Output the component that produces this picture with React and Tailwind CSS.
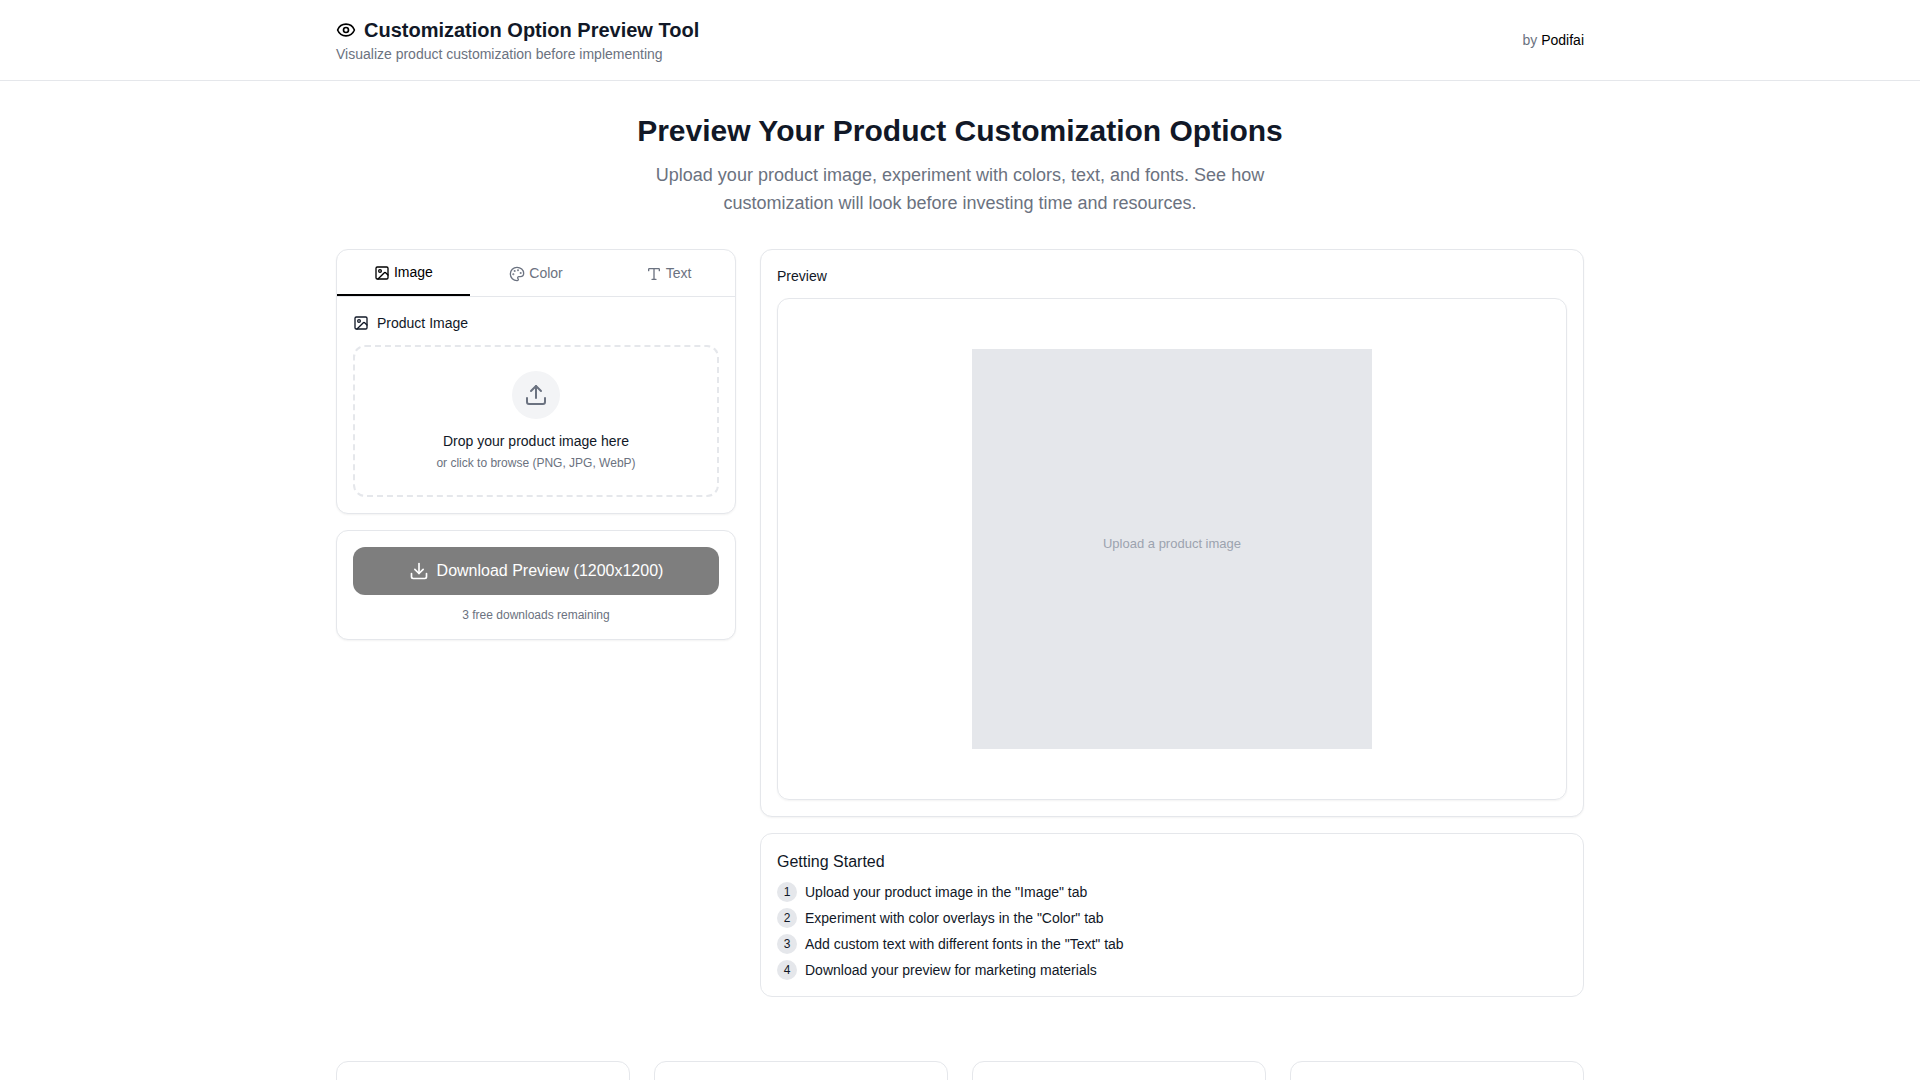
import { useState } from "react"
import { Download, Eye, Image, Palette, Type, Upload } from "lucide-react"

const tabs = [
    { id: "image", label: "Image", icon: Image },
    { id: "color", label: "Color", icon: Palette },
    { id: "text", label: "Text", icon: Type },
]

const steps = [
    'Upload your product image in the "Image" tab',
    'Experiment with color overlays in the "Color" tab',
    'Add custom text with different fonts in the "Text" tab',
    "Download your preview for marketing materials",
]

const Header = () => {
    return (
        <header className="border-b border-[#e5e7eb] bg-white">
            <div className="max-w-7xl mx-auto px-4 py-4 flex items-center justify-between">
                <div>
                    <h1 className="flex items-center gap-2 text-xl font-bold">
                        <Eye className="w-5 h-5 text-black" />
                        Customization Option Preview Tool
                    </h1>
                    <p className="text-sm text-[#6b7280]">Visualize product customization before implementing</p>
                </div>
                <p className="text-sm text-[#6b7280]">
                    by <a href="#" className="text-black hover:underline">Podifai</a>
                </p>
            </div>
        </header>
    )
}

const ControlPanel = () => {
    const [activeTab, setActiveTab] = useState("image")

    return (
        <div className="bg-white rounded-xl border border-[#e5e7eb] shadow-xs overflow-hidden">
            <div className="flex border-b border-[#e5e7eb]">
                {tabs.map(({ id, label, icon: Icon }) => (
                    <button
                        key={id}
                        className={
                            activeTab === id
                                ? "flex-1 py-3 text-sm text-black border-b-2 border-black"
                                : "flex-1 py-3 text-sm text-[#6b7280] hover:text-[#111827]"
                        }
                        onClick={() => setActiveTab(id)}
                    >
                        <Icon className="w-4 h-4 inline mr-1" />
                        {label}
                    </button>
                ))}
            </div>
            <div className="p-4">
                <h3 className="flex items-center gap-2 mb-3 text-sm">
                    <Image className="w-4 h-4" />
                    Product Image
                </h3>
                <label className="block p-6 text-center border-2 border-dashed border-[#e5e7eb] rounded-xl cursor-pointer">
                    <input type="file" accept="image/png,image/jpeg,image/webp" className="hidden" />
                    <span className="w-12 h-12 mx-auto mb-3 rounded-full bg-[#f3f4f6] flex items-center justify-center">
                        <Upload className="w-6 h-6 text-[#6b7280]" />
                    </span>
                    <span className="block text-sm">Drop your product image here</span>
                    <span className="block mt-1 text-xs text-[#6b7280]">or click to browse (PNG, JPG, WebP)</span>
                </label>
            </div>
        </div>
    )
}

const DownloadCard = () => {
    return (
        <div className="bg-white rounded-xl border border-[#e5e7eb] shadow-xs p-4">
            <button
                disabled
                className="w-full py-3 rounded-xl bg-black text-white flex items-center justify-center gap-2 disabled:opacity-50 disabled:cursor-not-allowed"
            >
                <Download className="w-5 h-5" />
                Download Preview (1200x1200)
            </button>
            <p className="mt-3 text-xs text-center text-[#6b7280]">3 free downloads remaining</p>
        </div>
    )
}

const PreviewCard = () => {
    return (
        <div className="bg-white rounded-xl border border-[#e5e7eb] shadow-xs p-4">
            <h3 className="mb-3 text-sm">Preview</h3>
            <div className="p-[50px] flex justify-center rounded-xl border border-[#e5e7eb] shadow-xs">
                <div className="w-full max-w-[400px] aspect-square pb-2.5 flex items-center justify-center bg-[#e5e7eb] text-[13px] text-[#9ca3af]">
                    Upload a product image
                </div>
            </div>
        </div>
    )
}

const GettingStarted = () => {
    return (
        <div className="bg-white rounded-xl border border-[#e5e7eb] p-4">
            <h3 className="mb-2 text-base">Getting Started</h3>
            <ol className="space-y-1.5 text-sm">
                {steps.map((step, i) => (
                    <li key={step} className="flex items-center gap-2">
                        <span className="w-5 h-5 rounded-full bg-[#e5e7eb] flex items-center justify-center text-xs">
                            {i + 1}
                        </span>
                        {step}
                    </li>
                ))}
            </ol>
        </div>
    )
}

const App = () => {
    return (
        <div className="min-h-screen bg-white text-[#111827] font-['Liberation_Sans',Arial,sans-serif]">
            <Header />
            <main className="max-w-7xl mx-auto px-4 py-8">
                <div className="mb-8 text-center">
                    <h2 className="mb-3 text-3xl font-bold">Preview Your Product Customization Options</h2>
                    <p className="max-w-2xl mx-auto text-lg text-[#6b7280]">
                        Upload your product image, experiment with colors, text, and fonts. See how customization will
                        look before investing time and resources.
                    </p>
                </div>

                <div className="grid lg:grid-cols-3 gap-6">
                    <div className="space-y-4">
                        <ControlPanel />
                        <DownloadCard />
                    </div>
                    <div className="lg:col-span-2 space-y-4">
                        <PreviewCard />
                        <GettingStarted />
                    </div>
                </div>

                <div className="mt-16 grid sm:grid-cols-2 lg:grid-cols-4 gap-6">
                    {[1, 2, 3, 4].map((n) => (
                        <div key={n} className="min-h-32 bg-white rounded-xl border border-[#e5e7eb]" />
                    ))}
                </div>
            </main>
        </div>
    )
}

export default App
